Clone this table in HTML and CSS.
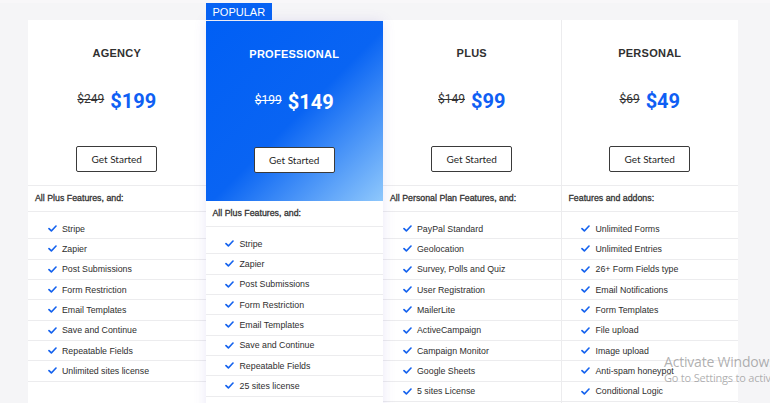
FILE: index.html
```html
<!DOCTYPE html>
<html lang="en">
<head>
<meta charset="utf-8">
<title>Pricing</title>
<link rel="stylesheet" href="styles.css">
</head>
<body>
<div class="page">
  <div class="plans">
    <div class="plan">
      <div class="head">
        <h3 class="title">AGENCY</h3>
        <div class="price"><s class="old">$249</s><span class="new">$199</span></div>
        <a class="btn" href="#">Get Started</a>
      </div>
      <div class="label">All Plus Features, and:</div>
      <ul class="feats">
        <li><svg class="ck" viewBox="0 0 10 8"><path d="M1 4.2 3.7 6.8 9 1.2"/></svg>Stripe</li>
        <li><svg class="ck" viewBox="0 0 10 8"><path d="M1 4.2 3.7 6.8 9 1.2"/></svg>Zapier</li>
        <li><svg class="ck" viewBox="0 0 10 8"><path d="M1 4.2 3.7 6.8 9 1.2"/></svg>Post Submissions</li>
        <li><svg class="ck" viewBox="0 0 10 8"><path d="M1 4.2 3.7 6.8 9 1.2"/></svg>Form Restriction</li>
        <li><svg class="ck" viewBox="0 0 10 8"><path d="M1 4.2 3.7 6.8 9 1.2"/></svg>Email Templates</li>
        <li><svg class="ck" viewBox="0 0 10 8"><path d="M1 4.2 3.7 6.8 9 1.2"/></svg>Save and Continue</li>
        <li><svg class="ck" viewBox="0 0 10 8"><path d="M1 4.2 3.7 6.8 9 1.2"/></svg>Repeatable Fields</li>
        <li><svg class="ck" viewBox="0 0 10 8"><path d="M1 4.2 3.7 6.8 9 1.2"/></svg>Unlimited sites license</li>
      </ul>
    </div>

    <div class="plan featured">
      <div class="tag">POPULAR</div>
      <div class="card">
        <div class="head head-blue">
          <h3 class="title">PROFESSIONAL</h3>
          <div class="price"><s class="old">$199</s><span class="new">$149</span></div>
          <a class="btn" href="#">Get Started</a>
        </div>
        <div class="label">All Plus Features, and:</div>
        <ul class="feats">
          <li><svg class="ck" viewBox="0 0 10 8"><path d="M1 4.2 3.7 6.8 9 1.2"/></svg>Stripe</li>
          <li><svg class="ck" viewBox="0 0 10 8"><path d="M1 4.2 3.7 6.8 9 1.2"/></svg>Zapier</li>
          <li><svg class="ck" viewBox="0 0 10 8"><path d="M1 4.2 3.7 6.8 9 1.2"/></svg>Post Submissions</li>
          <li><svg class="ck" viewBox="0 0 10 8"><path d="M1 4.2 3.7 6.8 9 1.2"/></svg>Form Restriction</li>
          <li><svg class="ck" viewBox="0 0 10 8"><path d="M1 4.2 3.7 6.8 9 1.2"/></svg>Email Templates</li>
          <li><svg class="ck" viewBox="0 0 10 8"><path d="M1 4.2 3.7 6.8 9 1.2"/></svg>Save and Continue</li>
          <li><svg class="ck" viewBox="0 0 10 8"><path d="M1 4.2 3.7 6.8 9 1.2"/></svg>Repeatable Fields</li>
          <li><svg class="ck" viewBox="0 0 10 8"><path d="M1 4.2 3.7 6.8 9 1.2"/></svg>25 sites license</li>
        </ul>
      </div>
    </div>

    <div class="plan">
      <div class="head">
        <h3 class="title">PLUS</h3>
        <div class="price"><s class="old">$149</s><span class="new">$99</span></div>
        <a class="btn" href="#">Get Started</a>
      </div>
      <div class="label">All Personal Plan Features, and:</div>
      <ul class="feats">
        <li><svg class="ck" viewBox="0 0 10 8"><path d="M1 4.2 3.7 6.8 9 1.2"/></svg>PayPal Standard</li>
        <li><svg class="ck" viewBox="0 0 10 8"><path d="M1 4.2 3.7 6.8 9 1.2"/></svg>Geolocation</li>
        <li><svg class="ck" viewBox="0 0 10 8"><path d="M1 4.2 3.7 6.8 9 1.2"/></svg>Survey, Polls and Quiz</li>
        <li><svg class="ck" viewBox="0 0 10 8"><path d="M1 4.2 3.7 6.8 9 1.2"/></svg>User Registration</li>
        <li><svg class="ck" viewBox="0 0 10 8"><path d="M1 4.2 3.7 6.8 9 1.2"/></svg>MailerLite</li>
        <li><svg class="ck" viewBox="0 0 10 8"><path d="M1 4.2 3.7 6.8 9 1.2"/></svg>ActiveCampaign</li>
        <li><svg class="ck" viewBox="0 0 10 8"><path d="M1 4.2 3.7 6.8 9 1.2"/></svg>Campaign Monitor</li>
        <li><svg class="ck" viewBox="0 0 10 8"><path d="M1 4.2 3.7 6.8 9 1.2"/></svg>Google Sheets</li>
        <li><svg class="ck" viewBox="0 0 10 8"><path d="M1 4.2 3.7 6.8 9 1.2"/></svg>5 sites License</li>
      </ul>
    </div>

    <div class="plan plan-last">
      <div class="head">
        <h3 class="title">PERSONAL</h3>
        <div class="price"><s class="old">$69</s><span class="new">$49</span></div>
        <a class="btn" href="#">Get Started</a>
      </div>
      <div class="label">Features and addons:</div>
      <ul class="feats">
        <li><svg class="ck" viewBox="0 0 10 8"><path d="M1 4.2 3.7 6.8 9 1.2"/></svg>Unlimited Forms</li>
        <li><svg class="ck" viewBox="0 0 10 8"><path d="M1 4.2 3.7 6.8 9 1.2"/></svg>Unlimited Entries</li>
        <li><svg class="ck" viewBox="0 0 10 8"><path d="M1 4.2 3.7 6.8 9 1.2"/></svg>26+ Form Fields type</li>
        <li><svg class="ck" viewBox="0 0 10 8"><path d="M1 4.2 3.7 6.8 9 1.2"/></svg>Email Notifications</li>
        <li><svg class="ck" viewBox="0 0 10 8"><path d="M1 4.2 3.7 6.8 9 1.2"/></svg>Form Templates</li>
        <li><svg class="ck" viewBox="0 0 10 8"><path d="M1 4.2 3.7 6.8 9 1.2"/></svg>File upload</li>
        <li><svg class="ck" viewBox="0 0 10 8"><path d="M1 4.2 3.7 6.8 9 1.2"/></svg>Image upload</li>
        <li><svg class="ck" viewBox="0 0 10 8"><path d="M1 4.2 3.7 6.8 9 1.2"/></svg>Anti-spam honeypot</li>
        <li><svg class="ck" viewBox="0 0 10 8"><path d="M1 4.2 3.7 6.8 9 1.2"/></svg>Conditional Logic</li>
      </ul>
    </div>
  </div>

  <div class="watermark">
    <div class="wm-1">Activate Windows</div>
    <div class="wm-2">Go to Settings to activate Windows.</div>
  </div>
</div>
</body>
</html>
```

FILE: styles.css
```css
html, body {
  margin: 0;
  padding: 0;
}

body {
  background: #f5f5f7;
  font-family: "Liberation Sans", Arial, sans-serif;
  color: #333;
  overflow: hidden;
}

.page {
  position: relative;
  width: 770px;
  height: 403px;
  overflow: hidden;
  background: linear-gradient(#f8f7f9 0, #f8f7f9 3px, #f5f5f7 3px);
}

.plans {
  display: grid;
  grid-template-columns: repeat(4, 177.5px);
  margin-left: 28px;
  padding-top: 3px;
  align-items: start;
}

.plan {
  background: #fff;
  margin-top: 17px;
  min-height: 420px;
  box-sizing: border-box;
}

.plan-last {
  border-left: 1px solid #ececee;
}

.featured {
  margin-top: 0;
  background: transparent;
  position: relative;
  z-index: 1;
}

.tag {
  display: inline-block;
  height: 17px;
  line-height: 18px;
  padding: 0 7px;
  background: #0762f3;
  color: #fff;
  font-size: 11px;
  vertical-align: top;
}

.card {
  background: #fff;
  min-height: 420px;
  box-shadow: 0 0 12px rgba(90, 70, 190, 0.13);
}

.head {
  height: 166px;
  box-sizing: border-box;
  border-bottom: 1px solid #ececee;
  display: flex;
  flex-direction: column;
  align-items: center;
  padding-top: 27px;
}

.head-blue {
  height: 180px;
  border-bottom: 0;
  background: linear-gradient(135deg, #005ff5 0%, #0964f3 52%, #8fc8fc 100%);
  color: #fff;
}

.title {
  margin: 0;
  font-size: 11px;
  line-height: 12px;
  font-weight: 700;
  letter-spacing: 0.25px;
  color: #303030;
}

.head-blue .title {
  color: #fff;
}

.price {
  margin-top: 30px;
  height: 24px;
  display: flex;
  align-items: center;
  gap: 6px;
  font-family: Roboto, "Liberation Sans", sans-serif;
}

.old {
  font-size: 12px;
  color: #333;
  margin-bottom: 4px;
}

.new {
  font-size: 20px;
  font-weight: 700;
  color: #0f5ff4;
}

.head-blue .old,
.head-blue .new {
  color: #fff;
}

.btn {
  margin-top: 33px;
  width: 81px;
  height: 26px;
  box-sizing: border-box;
  border: 1px solid #3a3a3a;
  border-radius: 2px;
  background: #fff;
  color: #1f1f1f;
  font-family: Lato, "Liberation Sans", sans-serif;
  font-size: 10px;
  display: flex;
  align-items: center;
  justify-content: center;
  text-decoration: none;
}

.label {
  height: 26px;
  box-sizing: border-box;
  border-bottom: 1px solid #ececee;
  padding-left: 7px;
  font-size: 8.8px;
  line-height: 25px;
  color: #333;
  -webkit-text-stroke: 0.3px #333;
}

.feats {
  list-style: none;
  margin: 0;
  padding: 7px 0 0;
}

.feats li {
  height: 20.34px;
  box-sizing: border-box;
  border-bottom: 1px solid #ececee;
  display: flex;
  align-items: center;
  padding-left: 19.5px;
  font-size: 8.8px;
  color: #2e2e2e;
}

.ck {
  width: 9px;
  height: 7px;
  margin-right: 5.5px;
  flex: none;
  fill: none;
  stroke: #1462ee;
  stroke-width: 1.9;
  stroke-linecap: round;
  stroke-linejoin: round;
}

.watermark {
  position: absolute;
  left: 664px;
  top: 353px;
  white-space: nowrap;
  font-family: "Open Sans", "Noto Sans", sans-serif;
  color: rgba(110, 110, 110, 0.55);
  letter-spacing: -0.2px;
  pointer-events: none;
}

.wm-1 {
  font-size: 14px;
  line-height: 17px;
}

.wm-2 {
  font-size: 11px;
  line-height: 14px;
  margin-top: 1px;
}
```
